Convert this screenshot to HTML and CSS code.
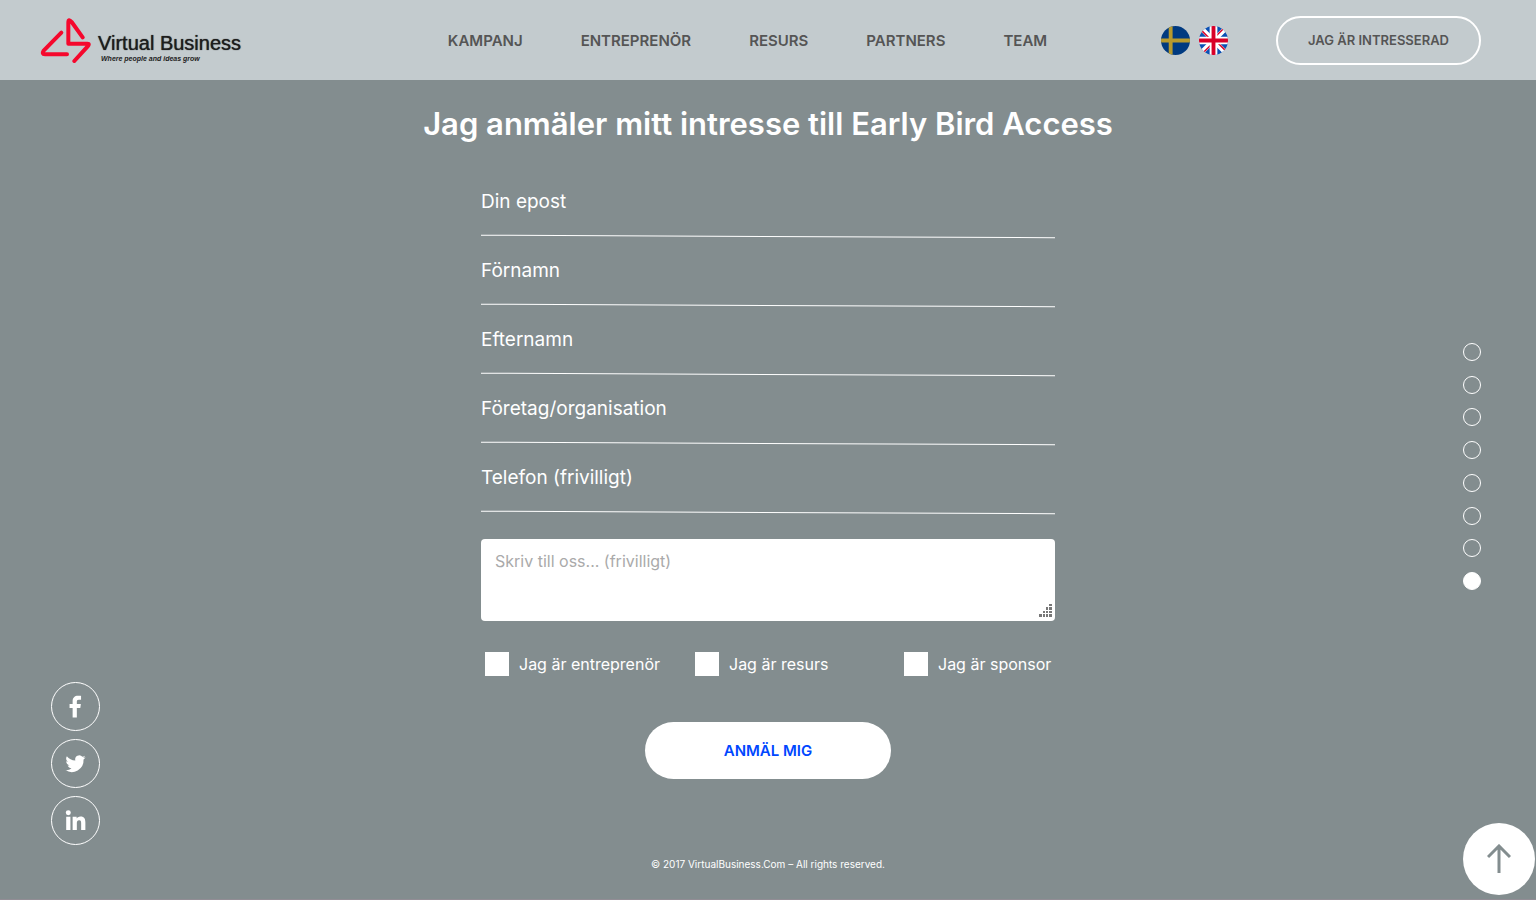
FILE: index.html
```html
<!DOCTYPE html>
<html lang="sv">

<head>
    <meta charset="utf-8">
    <meta name="viewport" content="width=device-width, initial-scale=1">
    <title>Virtual Business</title>
    <link rel="stylesheet" href="styles.css">
</head>

<body>
    <header class="header">
        <div class="header-side">
            <a class="logo" href="#">
                <svg class="logo-mark" viewBox="30 36 156 135" aria-hidden="true">
                    <path d="M94 80 L41 134 Q34 145 45 145 H111" />
                    <path d="M158 94 L125 48 Q115 36 115 50 V113 H172 Q180 113 173 121 L133 165" />
                </svg>
                <span class="logo-text">
                    <span class="logo-name">Virtual Business</span>
                    <span class="logo-tagline">Where people and ideas grow</span>
                </span>
            </a>
        </div>
        <nav class="nav">
            <a href="#kampanj">KAMPANJ</a>
            <a href="#entreprenor">ENTREPRENÖR</a>
            <a href="#resurs">RESURS</a>
            <a href="#partners">PARTNERS</a>
            <a href="#team">TEAM</a>
        </nav>
        <div class="header-side header-right">
            <div class="flags">
                <a href="#sv" aria-label="Svenska">
                    <svg viewBox="0 0 30 30">
                        <path fill="#003a80" d="M0 0h30v30H0z" />
                        <path fill="#b79a2e" d="M8 0h4v30H8zM0 13h30v4H0z" />
                    </svg>
                </a>
                <a href="#en" aria-label="English">
                    <svg viewBox="0 0 30 30">
                        <path fill="#0a50b4" d="M0 0h30v30H0z" />
                        <path stroke="#fff" stroke-width="5" d="M0 0l30 30M30 0L0 30" />
                        <path stroke="#d80027" stroke-width="1.500" d="M2 4l11 11M17 15l11 11M26 2L15 13M15 17L4 28" />
                        <path fill="#fff" d="M11 0h8v30h-8zM0 11h30v8H0z" />
                        <path fill="#d80027" d="M13 0h4v30h-4zM0 13h30v4H0z" />
                    </svg>
                </a>
            </div>
            <button class="interest" type="button">JAG ÄR INTRESSERAD</button>
        </div>
    </header>

    <main class="main">
        <h1>Jag anmäler mitt intresse till Early Bird Access</h1>
        <form class="form">
            <div class="field"><input type="email" placeholder="Din epost" aria-label="Din epost"></div>
            <div class="field"><input type="text" placeholder="Förnamn" aria-label="Förnamn"></div>
            <div class="field"><input type="text" placeholder="Efternamn" aria-label="Efternamn"></div>
            <div class="field"><input type="text" placeholder="Företag/organisation" aria-label="Företag/organisation"></div>
            <div class="field"><input type="tel" placeholder="Telefon (frivilligt)" aria-label="Telefon (frivilligt)"></div>
            <div class="message">
                <textarea placeholder="Skriv till oss... (frivilligt)" aria-label="Skriv till oss"></textarea>
                <svg class="grip" viewBox="0 0 13 13" aria-hidden="true">
                    <path d="M10 0h3v2h-3zM7 3h2v3H7zM10 3h3v3h-3zM4 7h2v2H4zM7 7h2v2H7zM10 7h3v2h-3zM0 10h3v3H0zM4 10h2v3H4zM7 10h2v3H7zM10 10h3v3h-3z" />
                </svg>
            </div>
            <div class="roles">
                <label><input type="checkbox" name="entreprenor">Jag är entreprenör</label>
                <label><input type="checkbox" name="resurs">Jag är resurs</label>
                <label><input type="checkbox" name="sponsor">Jag är sponsor</label>
            </div>
            <button class="submit" type="submit">ANMÄL MIG</button>
        </form>
    </main>

    <footer class="footer">© 2017 VirtualBusiness.Com – All rights reserved.</footer>

    <div class="social">
        <a href="#facebook" aria-label="Facebook">
            <svg viewBox="0 0 24 24">
                <path d="M9 23.500V13.600H5.800V9.400H9V6.400C9 2.800 11.200.8 14.500.8c1.500 0 2.900.1 3.300.2v3.900h-2.300c-1.800 0-2.100.9-2.100 2.100v2.400h4.200l-.6 4.200h-3.600v9.900z" />
            </svg>
        </a>
        <a href="#twitter" aria-label="Twitter">
            <svg viewBox="0 0 24 24">
                <path d="M22.500 5.600c-.8.4-1.600.6-2.500.7.9-.5 1.600-1.400 1.900-2.400-.8.5-1.800.9-2.700 1.100a4.300 4.300 0 0 0-7.400 3.900C8.200 8.700 5.100 7 3 4.400a4.300 4.300 0 0 0 1.300 5.800c-.7 0-1.400-.2-2-.5 0 2.100 1.500 3.900 3.500 4.300-.6.2-1.300.2-2 .1.600 1.700 2.200 2.900 4 3a8.700 8.700 0 0 1-6.400 1.800A12.300 12.300 0 0 0 20.400 7.900c.8-.6 1.500-1.400 2.100-2.300z" />
            </svg>
        </a>
        <a href="#linkedin" aria-label="LinkedIn">
            <svg viewBox="0 0 24 24">
                <circle cx="4.500" cy="4" r="2.600" />
                <path d="M2.300 8h4.400v14H2.300zM9 8h4.200v1.900c.6-1.100 2-2.200 4-2.200 4.200 0 5.100 2.700 5.100 6.300v8h-4.400v-6.800c0-1.600 0-3.500-2.100-3.500s-2.400 1.600-2.400 3.400V22H9z" />
            </svg>
        </a>
    </div>

    <nav class="dots" aria-label="Sektioner">
        <a href="#1" aria-label="1"></a>
        <a href="#2" aria-label="2"></a>
        <a href="#3" aria-label="3"></a>
        <a href="#4" aria-label="4"></a>
        <a href="#5" aria-label="5"></a>
        <a href="#6" aria-label="6"></a>
        <a href="#7" aria-label="7"></a>
        <a class="active" href="#8" aria-label="8"></a>
    </nav>

    <a class="to-top" href="#" aria-label="Till toppen">
        <svg viewBox="0 0 24 30">
            <path d="M12 29V3M1 13L12 2l11 11" />
        </svg>
    </a>
</body>

</html>
```

FILE: styles.css
```css
* {
    box-sizing: border-box;
}

body {
    display: flex;
    flex-direction: column;
    min-height: 100vh;
    margin: 0;
    background: #838d8f;
    border-bottom: 1px solid #928d95;
    color: #fff;
    font-family: Inter, "Liberation Sans", sans-serif;
}

a {
    color: inherit;
    text-decoration: none;
}

button {
    font-family: inherit;
    font-weight: 600;
    cursor: pointer;
}

/* header */
.header {
    display: flex;
    align-items: center;
    height: 80px;
    padding: 0 55px 0 14px;
    background: #c3cbce;
    color: #555;
}

.header-side {
    flex: 1 0 0;
}

.logo {
    display: flex;
    gap: 6px;
    padding-left: 26px;
    color: #1d1d1d;
}

.logo-mark {
    width: 52px;
    height: 45px;
    fill: none;
    stroke: #f5082d;
    stroke-width: 12;
    stroke-linecap: round;
    stroke-linejoin: round;
}

.logo-text {
    display: flex;
    flex-direction: column;
    justify-content: flex-end;
    font-family: "Liberation Sans", sans-serif;
    white-space: nowrap;
}

.logo-name {
    font-size: 20px;
    line-height: 24px;
    text-shadow: 0 0 1px #1d1d1d;
}

.logo-tagline {
    padding-left: 3px;
    font-size: 7px;
    font-style: italic;
    font-weight: 700;
    line-height: 8px;
}

.nav {
    display: flex;
    gap: 58px;
    font-size: 15px;
    font-weight: 600;
}

.header-right {
    display: flex;
    align-items: center;
    justify-content: flex-end;
    gap: 48px;
}

.flags {
    display: flex;
    gap: 9px;
}

.flags a,
.flags svg {
    display: block;
    width: 29px;
    height: 29px;
    border-radius: 50%;
}

.interest {
    width: 205px;
    height: 49px;
    border: 2px solid #fff;
    border-radius: 25px;
    background: none;
    color: #555;
    font-size: 13px;
}

/* form */
.main {
    padding: 24px 20px 0;
}

h1 {
    margin: 0 0 24px;
    font-size: 31px;
    font-weight: 600;
    line-height: 40px;
    text-align: center;
}

.form {
    max-width: 574px;
    margin: 0 auto;
}

.field {
    position: relative;
    height: 69px;
}

.field input {
    width: 100%;
    height: 66px;
    padding: 0;
    border: 0;
    outline: 0;
    background: none;
    color: #fff;
    font: 400 19px Inter, sans-serif;
}

.field input::placeholder {
    color: #fff;
    opacity: 1;
}

/* slightly slanted underline */
.field::after {
    content: "";
    position: absolute;
    left: 0;
    right: 0;
    bottom: 0;
    height: 1px;
    background: #fff;
    transform: rotate(.25deg);
}

.message {
    position: relative;
    margin-top: 26px;
}

.message textarea {
    display: block;
    width: 100%;
    height: 82px;
    padding: 11px 14px;
    border: 0;
    border-radius: 4px;
    resize: none;
    font: 400 16px/22px Inter, sans-serif;
}

.message textarea::placeholder {
    color: #aaa;
}

.grip {
    position: absolute;
    right: 3px;
    bottom: 4px;
    width: 13px;
    height: 13px;
    fill: #777;
}

.roles {
    display: grid;
    grid-template-columns: 210px 209px auto;
    margin-top: 31px;
    padding: 0 4px;
    font-size: 16px;
    white-space: nowrap;
}

.roles label {
    display: flex;
    align-items: center;
    gap: 10px;
}

.roles input {
    appearance: none;
    width: 24px;
    height: 24px;
    margin: 0;
    background: #fff;
}

.roles input:checked {
    box-shadow: inset 0 0 0 6px #fff;
    background: #0047ff;
}

.submit {
    display: block;
    width: 246px;
    height: 57px;
    margin: 46px auto 0;
    border: 0;
    border-radius: 29px;
    background: #fff;
    color: #0047ff;
    font-size: 15px;
}

.footer {
    margin-top: auto;
    padding: 20px 0 27px;
    font-size: 10px;
    line-height: 16px;
    text-align: center;
}

/* fixed side controls */
.social {
    position: fixed;
    left: 51px;
    bottom: 55px;
    display: flex;
    flex-direction: column;
    gap: 8px;
}

.social a {
    display: flex;
    align-items: center;
    justify-content: center;
    width: 49px;
    height: 49px;
    border: 1px solid #fff;
    border-radius: 50%;
}

.social svg {
    width: 23px;
    height: 23px;
    fill: #fff;
}

.dots {
    position: fixed;
    top: 343px;
    right: 55px;
    display: flex;
    flex-direction: column;
    justify-content: space-between;
    height: 247px;
}

.dots a {
    width: 18px;
    height: 18px;
    border: 1px solid #fff;
    border-radius: 50%;
}

.dots .active {
    background: #fff;
}

.to-top {
    position: fixed;
    right: 1px;
    bottom: 5px;
    display: flex;
    align-items: center;
    justify-content: center;
    width: 72px;
    height: 72px;
    border-radius: 50%;
    background: #fff;
}

.to-top svg {
    width: 24px;
    height: 30px;
    fill: none;
    stroke: #838d8f;
    stroke-width: 3;
}
```
